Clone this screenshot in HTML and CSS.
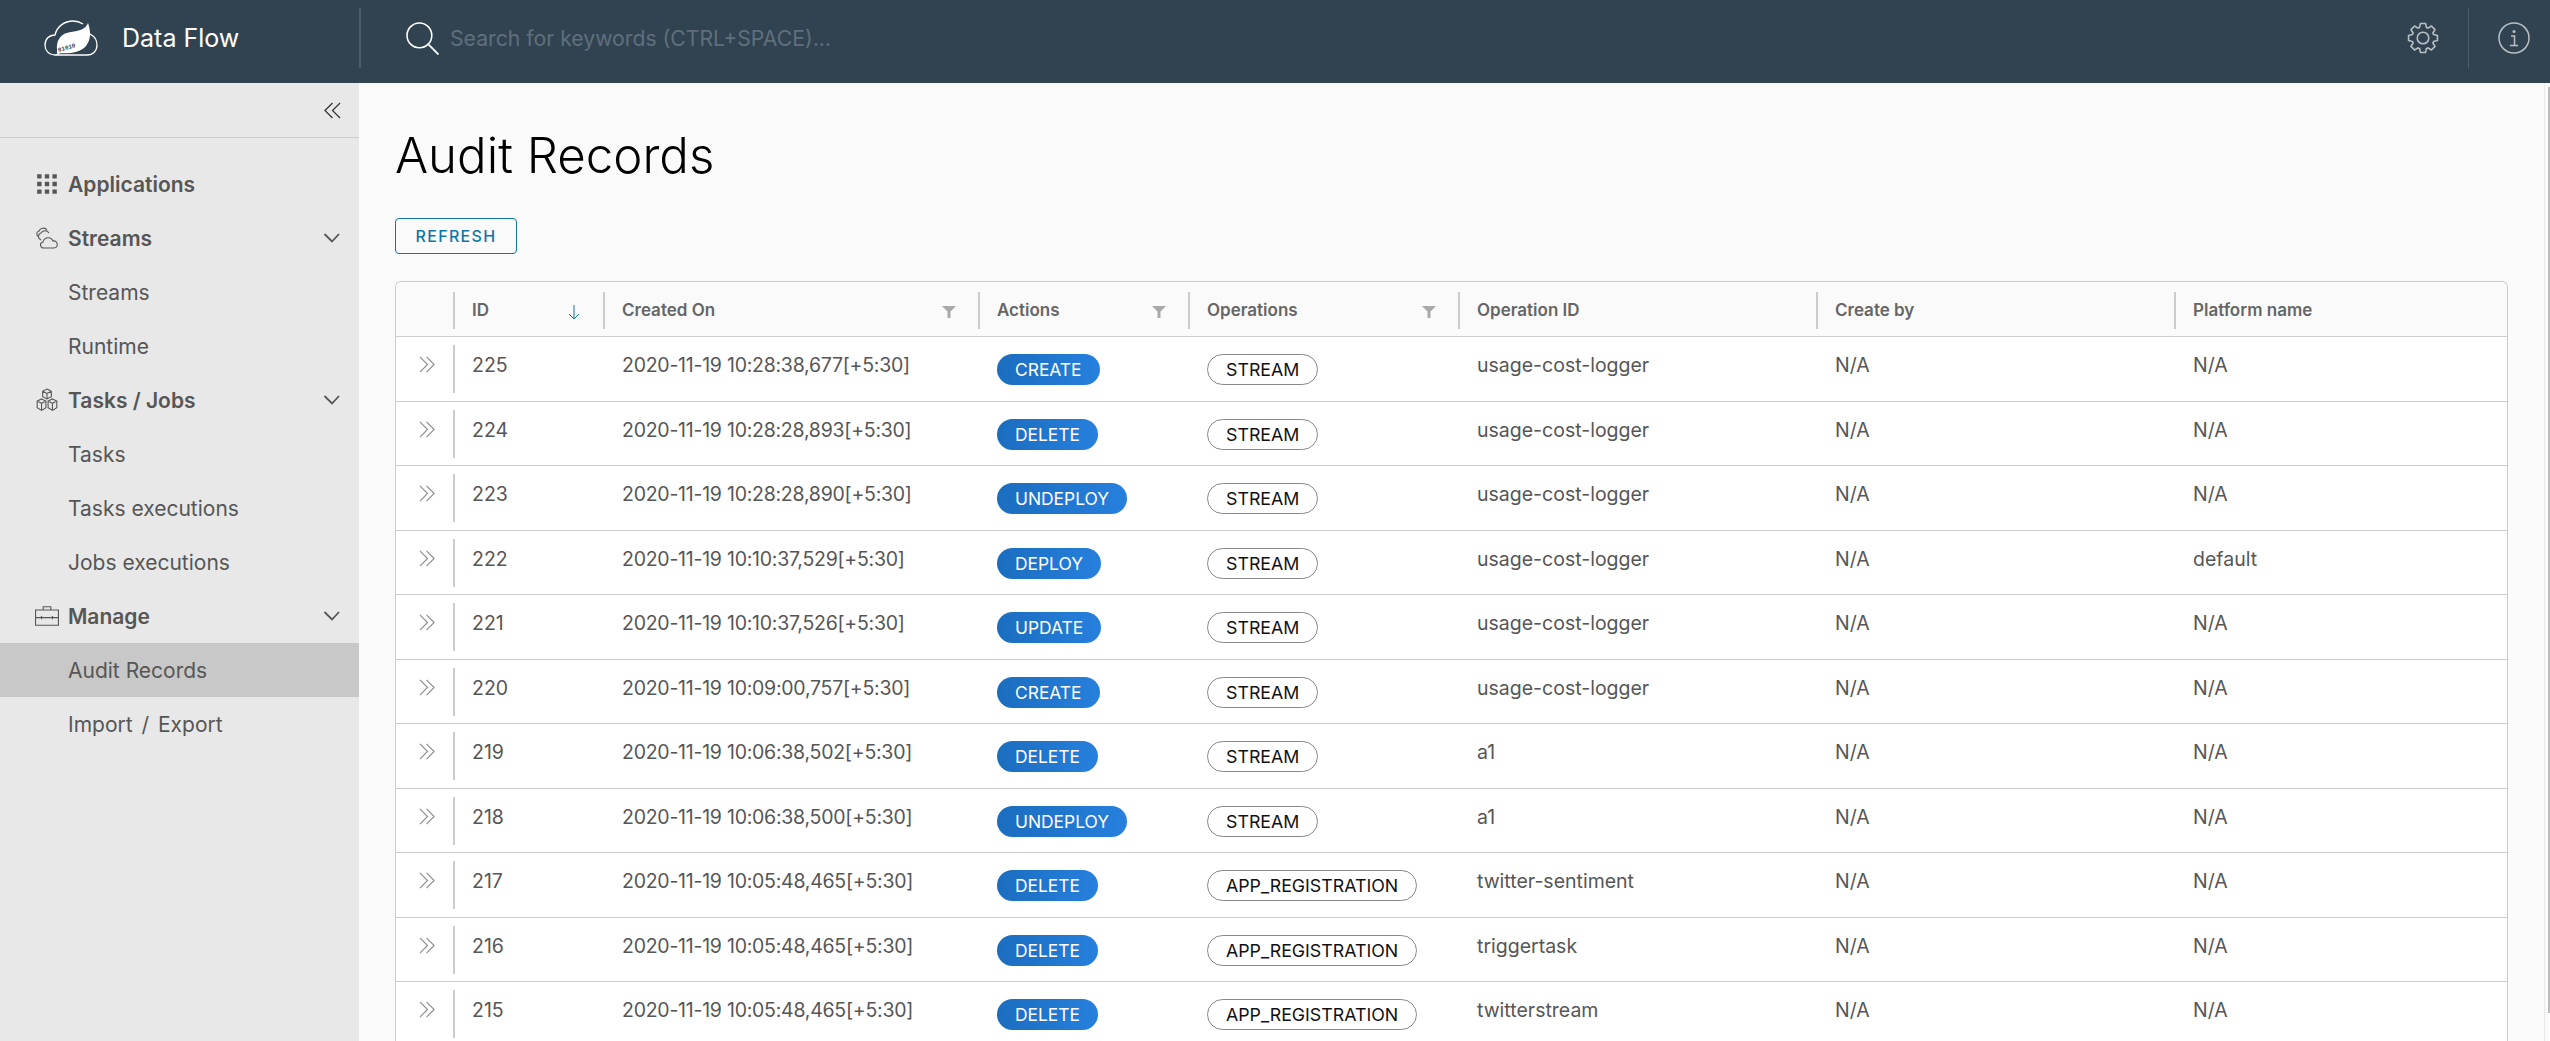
FILE: index.html
```html
<!DOCTYPE html>
<html lang="en">
<head>
<meta charset="utf-8">
<title>Audit Records - Data Flow</title>
<link rel="stylesheet" href="styles.css">
</head>
<body>
<svg class="defs" width="0" height="0" aria-hidden="true">
  <symbol id="chev-r" viewBox="0 0 18 18"><path d="M1 1l8 8-8 8M8 1l8 8-8 8" fill="none" stroke="currentColor" stroke-width="1.2"/></symbol>
  <symbol id="chev-d" viewBox="0 0 18 12"><path d="M1.5 2l7.500 7.500L16 2" fill="none" stroke="currentColor" stroke-width="1.8"/></symbol>
  <symbol id="filter" viewBox="0 0 14 12"><path d="M0 0h14L8.500 5.500V12H5.500V5.500z" fill="currentColor"/></symbol>
</svg>
<header class="topbar">
  <div class="brand">
    <svg class="logo" viewBox="0 0 54 36" aria-hidden="true">
      <path d="M12 35C4 35 1 30 1 25 1 19 5 15 11 15 13 6 21 1 29 1c4 0 7 1 10 3M46 14c4 2 7 6 7 11 0 6-4 10-10 10H12z" fill="none" stroke="#fff" stroke-width="1.300"/>
      <path d="M13 30C12 20 17 13 27 12 35 11 42 9 44 3c3 8 3 17-2 23-6 7-18 8-29 7z" fill="#fff"/>
      <text class="logo-bits" transform="translate(14.500 32) rotate(-16)">01010</text>
    </svg>
    <span class="brand-name">Data Flow</span>
  </div>
  <div class="search">
    <svg class="search-icon" viewBox="0 0 32 32" aria-hidden="true"><circle cx="13" cy="13" r="12" fill="none" stroke="#fff" stroke-width="1.500"/><path d="M22 22l9.500 9.500" stroke="#fff" stroke-width="1.800" fill="none"/></svg>
    <span class="placeholder">Search for keywords (CTRL+SPACE)...</span>
  </div>
  <div class="top-action">
    <svg class="top-icon" viewBox="0 0 36 36" aria-hidden="true"><path d="M14.14 6.110L15.13 1.750H20.870L21.860 6.110 23.680 6.860 27.460 4.480 31.520 8.540 29.140 12.320 29.890 14.140 34.250 15.130V20.870L29.890 21.860 29.140 23.680 31.520 27.460 27.460 31.520 23.680 29.140 21.860 29.890 20.870 34.250H15.130L14.140 29.890 12.320 29.140 8.540 31.520 4.480 27.460 6.860 23.680 6.110 21.860 1.750 20.870V15.130L6.110 14.140 6.860 12.320 4.480 8.540 8.540 4.480 12.320 6.860z" fill="none" stroke="currentColor" stroke-width="1.800" stroke-linejoin="round"/><circle cx="18" cy="18" r="6.500" fill="none" stroke="currentColor" stroke-width="1.800"/></svg>
  </div>
  <div class="top-action divided">
    <svg class="top-icon" viewBox="0 0 32 32" aria-hidden="true"><circle cx="16" cy="16" r="15" fill="none" stroke="currentColor" stroke-width="1.500"/><circle cx="16" cy="9.500" r="1.500" fill="currentColor"/><path d="M13 14h3.500v9M12 23.500h8" fill="none" stroke="currentColor" stroke-width="1.500"/></svg>
  </div>
</header>
<div class="shell">
  <nav class="sidebar">
    <div class="collapse"><svg class="collapse-icon" viewBox="0 0 18 18" aria-hidden="true"><path d="M9 1L1 9l8 8M17 1L9 9l8 8" fill="none" stroke="currentColor" stroke-width="1.300"/></svg></div>
    <ul class="menu">
      <li class="item group"><svg class="nav-icon" viewBox="0 0 22 22" aria-hidden="true"><path d="M2 2h4v4H2zM9 2h4v4H9zM16 2h4v4h-4zM2 9h4v4H2zM9 9h4v4H9zM16 9h4v4h-4zM2 16h4v4H2zM9 16h4v4H9zM16 16h4v4h-4z" fill="currentColor"/></svg>Applications</li>
      <li class="item group"><svg class="nav-icon" viewBox="0 0 24 22" aria-hidden="true"><g fill="none" stroke="currentColor" stroke-width="1.100"><path d="M4 10C1 8 1 5 4 4c1-3 6-4 8-1M6 13C2 11 3 7 6 6c2-3 6-3 8 0M9 21c-4 0-5-5-1-6 1-5 8-6 10-1 5-1 6 7 1 7z"/></g></svg>Streams<svg class="caret" aria-hidden="true"><use href="#chev-d"/></svg></li>
      <li class="item sub">Streams</li>
      <li class="item sub">Runtime</li>
      <li class="item group"><svg class="nav-icon" viewBox="0 0 22 22" aria-hidden="true"><g fill="none" stroke="currentColor" stroke-width="1"><path d="M11 1l4 2v5l-4 2-4-2V3zM7 3l4 2 4-2M11 5v5"/><path d="M6 10l4 2v6l-4 2.500L2 18v-6zM2 12l4 2 4-2M6 14v6.500"/><path d="M16 10l4 2v6l-4 2.500-4-2.500v-6zM12 12l4 2 4-2M16 14v6.500"/></g></svg>Tasks / Jobs<svg class="caret" aria-hidden="true"><use href="#chev-d"/></svg></li>
      <li class="item sub">Tasks</li>
      <li class="item sub">Tasks executions</li>
      <li class="item sub">Jobs executions</li>
      <li class="item group"><svg class="nav-icon" viewBox="0 0 22 20" aria-hidden="true"><g fill="none" stroke="currentColor" stroke-width="1"><path d="M.5 4.500h21v14H.5zM7.500 4.500V1.500h7v3M.5 11.500H6M16 11.500h5.500M6 10v3M16 10v3M6 11.500h10"/></g></svg>Manage<svg class="caret" aria-hidden="true"><use href="#chev-d"/></svg></li>
      <li class="item sub active">Audit Records</li>
      <li class="item sub spaced">Import / Export</li>
    </ul>
  </nav>
  <main class="content">
    <h1 class="title">Audit Records</h1>
    <button class="refresh" type="button">REFRESH</button>
    <div class="grid">
      <div class="row head">
        <div class="cell expander"></div>
        <div class="cell sep"><span>ID</span><svg class="sort" viewBox="0 0 12 16" aria-hidden="true"><path d="M6 1v14M1 10l5 5 5-5" fill="none" stroke="currentColor" stroke-width="1"/></svg></div>
        <div class="cell sep"><span>Created On</span><svg class="funnel" aria-hidden="true"><use href="#filter"/></svg></div>
        <div class="cell sep"><span>Actions</span><svg class="funnel" aria-hidden="true"><use href="#filter"/></svg></div>
        <div class="cell sep"><span>Operations</span><svg class="funnel" aria-hidden="true"><use href="#filter"/></svg></div>
        <div class="cell sep"><span>Operation ID</span></div>
        <div class="cell sep"><span>Create by</span></div>
        <div class="cell sep"><span>Platform name</span></div>
      </div>
      <div class="row"><div class="cell expander"><svg class="expand" aria-hidden="true"><use href="#chev-r"/></svg></div><div class="cell sep">225</div><div class="cell date">2020-11-19 10:28:38,677[+5:30]</div><div class="cell"><span class="pill blue">CREATE</span></div><div class="cell"><span class="pill outline">STREAM</span></div><div class="cell">usage-cost-logger</div><div class="cell">N/A</div><div class="cell">N/A</div></div>
      <div class="row"><div class="cell expander"><svg class="expand" aria-hidden="true"><use href="#chev-r"/></svg></div><div class="cell sep">224</div><div class="cell date">2020-11-19 10:28:28,893[+5:30]</div><div class="cell"><span class="pill blue">DELETE</span></div><div class="cell"><span class="pill outline">STREAM</span></div><div class="cell">usage-cost-logger</div><div class="cell">N/A</div><div class="cell">N/A</div></div>
      <div class="row"><div class="cell expander"><svg class="expand" aria-hidden="true"><use href="#chev-r"/></svg></div><div class="cell sep">223</div><div class="cell date">2020-11-19 10:28:28,890[+5:30]</div><div class="cell"><span class="pill blue">UNDEPLOY</span></div><div class="cell"><span class="pill outline">STREAM</span></div><div class="cell">usage-cost-logger</div><div class="cell">N/A</div><div class="cell">N/A</div></div>
      <div class="row"><div class="cell expander"><svg class="expand" aria-hidden="true"><use href="#chev-r"/></svg></div><div class="cell sep">222</div><div class="cell date">2020-11-19 10:10:37,529[+5:30]</div><div class="cell"><span class="pill blue">DEPLOY</span></div><div class="cell"><span class="pill outline">STREAM</span></div><div class="cell">usage-cost-logger</div><div class="cell">N/A</div><div class="cell">default</div></div>
      <div class="row"><div class="cell expander"><svg class="expand" aria-hidden="true"><use href="#chev-r"/></svg></div><div class="cell sep">221</div><div class="cell date">2020-11-19 10:10:37,526[+5:30]</div><div class="cell"><span class="pill blue">UPDATE</span></div><div class="cell"><span class="pill outline">STREAM</span></div><div class="cell">usage-cost-logger</div><div class="cell">N/A</div><div class="cell">N/A</div></div>
      <div class="row"><div class="cell expander"><svg class="expand" aria-hidden="true"><use href="#chev-r"/></svg></div><div class="cell sep">220</div><div class="cell date">2020-11-19 10:09:00,757[+5:30]</div><div class="cell"><span class="pill blue">CREATE</span></div><div class="cell"><span class="pill outline">STREAM</span></div><div class="cell">usage-cost-logger</div><div class="cell">N/A</div><div class="cell">N/A</div></div>
      <div class="row"><div class="cell expander"><svg class="expand" aria-hidden="true"><use href="#chev-r"/></svg></div><div class="cell sep">219</div><div class="cell date">2020-11-19 10:06:38,502[+5:30]</div><div class="cell"><span class="pill blue">DELETE</span></div><div class="cell"><span class="pill outline">STREAM</span></div><div class="cell">a1</div><div class="cell">N/A</div><div class="cell">N/A</div></div>
      <div class="row"><div class="cell expander"><svg class="expand" aria-hidden="true"><use href="#chev-r"/></svg></div><div class="cell sep">218</div><div class="cell date">2020-11-19 10:06:38,500[+5:30]</div><div class="cell"><span class="pill blue">UNDEPLOY</span></div><div class="cell"><span class="pill outline">STREAM</span></div><div class="cell">a1</div><div class="cell">N/A</div><div class="cell">N/A</div></div>
      <div class="row"><div class="cell expander"><svg class="expand" aria-hidden="true"><use href="#chev-r"/></svg></div><div class="cell sep">217</div><div class="cell date">2020-11-19 10:05:48,465[+5:30]</div><div class="cell"><span class="pill blue">DELETE</span></div><div class="cell"><span class="pill outline">APP_REGISTRATION</span></div><div class="cell">twitter-sentiment</div><div class="cell">N/A</div><div class="cell">N/A</div></div>
      <div class="row"><div class="cell expander"><svg class="expand" aria-hidden="true"><use href="#chev-r"/></svg></div><div class="cell sep">216</div><div class="cell date">2020-11-19 10:05:48,465[+5:30]</div><div class="cell"><span class="pill blue">DELETE</span></div><div class="cell"><span class="pill outline">APP_REGISTRATION</span></div><div class="cell">triggertask</div><div class="cell">N/A</div><div class="cell">N/A</div></div>
      <div class="row"><div class="cell expander"><svg class="expand" aria-hidden="true"><use href="#chev-r"/></svg></div><div class="cell sep">215</div><div class="cell date">2020-11-19 10:05:48,465[+5:30]</div><div class="cell"><span class="pill blue">DELETE</span></div><div class="cell"><span class="pill outline">APP_REGISTRATION</span></div><div class="cell">twitterstream</div><div class="cell">N/A</div><div class="cell">N/A</div></div>
    </div>
  </main>
  <div class="scrollbar"><div class="thumb"></div></div>
</div>
</body>
</html>
```
FILE: styles.css
```css
* { box-sizing: border-box; }
html, body { margin: 0; height: 100%; overflow: hidden; }
body { font-family: Inter, "Noto Sans", sans-serif; color: #565656; background: #fafafa; display: flex; flex-direction: column; }
.defs { position: absolute; }

.topbar { height: 83px; flex: none; background: #314351; display: flex; align-items: center; padding: 8px 0 15px; color: #fff; }
.brand { width: 361px; height: 60px; flex: none; display: flex; align-items: center; padding-left: 44px; border-right: 2px solid #4c5c69; }
.logo { width: 54px; height: 36px; flex: none; }
.logo-bits { font: 700 6px "Liberation Mono", monospace; fill: #314351; }
.brand-name { margin-left: 24px; font-size: 25px; font-weight: 400; }
.search { flex: 1; display: flex; align-items: center; padding-left: 45px; }
.search-icon { width: 33px; height: 33px; flex: none; }
.placeholder { margin-left: 11px; font-size: 21.200px; color: #5f6f7c; }
.top-action { width: 91px; height: 60px; flex: none; display: flex; align-items: center; justify-content: center; color: #b9c0c5; }
.top-action.divided { width: 82px; border-left: 1px solid #4c5c69; justify-content: flex-start; padding-left: 29px; }
.top-icon { width: 32px; height: 32px; }

.shell { flex: 1; min-height: 0; display: flex; }
.sidebar { width: 359px; flex: none; background: #e8e8e8; }
.collapse { height: 55px; border-bottom: 1px solid #ccc; display: flex; align-items: center; justify-content: flex-end; padding-right: 18px; color: #333; }
.collapse-icon { width: 17px; height: 17px; }
.menu { list-style: none; margin: 19px 0 0; padding: 0; }
.item { height: 54px; display: flex; align-items: center; padding-left: 68px; font-size: 21px; color: #565656; position: relative; white-space: pre; }
.item.group { font-weight: 600; }
.item.active { background: #c8c8c8; }
.item.spaced { word-spacing: 3px; }
.nav-icon { position: absolute; left: 35px; top: 15px; width: 24px; height: 24px; }
.caret { position: absolute; right: 18px; top: 21px; width: 18px; height: 12px; color: #555; }

.content { flex: 1; min-width: 0; padding: 0 36px; overflow: hidden; }
.title { margin: 40px 0 0; font-size: 49.200px; line-height: 64px; font-weight: 300; color: #000; }
.refresh { display: block; margin: 31px 0 0; width: 122px; height: 36px; background: transparent; border: 1px solid #0f77a8; border-radius: 4px; color: #0f77a8; font: 500 16px Inter, sans-serif; letter-spacing: 1.300px; padding: 0; }
.grid { margin-top: 27px; border: 1px solid #ccc; border-bottom: 0; border-radius: 6px 6px 0 0; background: #fff; }
.row { display: grid; grid-template-columns: 57px 150px 375px 210px 270px 358px 358px 1fr; height: 64.560px; border-bottom: 1px solid #ccc; font-size: 19.500px; }
.row.head { height: 55px; background: #fafafa; border-radius: 6px 6px 0 0; font-size: 17px; font-weight: 600; color: #666; }
.cell { position: relative; padding: 10px 19px 0; line-height: 36px; white-space: nowrap; }
.cell.date { letter-spacing: -0.250px; }
.row.head .cell { line-height: 32px; padding-top: 12px; }
.row.head .cell + .cell::before { content: ""; position: absolute; left: 0; top: 10px; height: 37px; width: 2px; background: #ccc; }
.row:not(.head) .cell.sep::before { content: ""; position: absolute; left: 0; top: 8px; height: 48px; width: 2px; background: #ccc; }
.row .expander { padding: 0; }
.expand { position: absolute; left: 23px; top: 19px; width: 17px; height: 17px; color: #8c8c8c; }
.funnel { position: absolute; right: 22px; top: 24px; width: 14px; height: 12px; color: #a9a9a9; }
.sort { position: absolute; right: 23px; top: 22px; width: 12px; height: 16px; color: #0f77a8; }
.pill { display: inline-block; height: 31px; line-height: 29px; padding: 0 18px; border-radius: 16px; font-size: 17.400px; vertical-align: top; margin-top: 7px; }
.pill.blue { background: linear-gradient(90deg, #1b6dbf, #2680dd); color: #fff; line-height: 31px; }
.pill.outline { border: 1px solid #888; color: #111; background: #fff; font-size: 17.800px; }

.scrollbar { width: 6px; flex: none; border-left: 1px solid #e8e8e8; padding: 4px 0 28px 3px; }
.thumb { height: 100%; background: #bbb; }
```
